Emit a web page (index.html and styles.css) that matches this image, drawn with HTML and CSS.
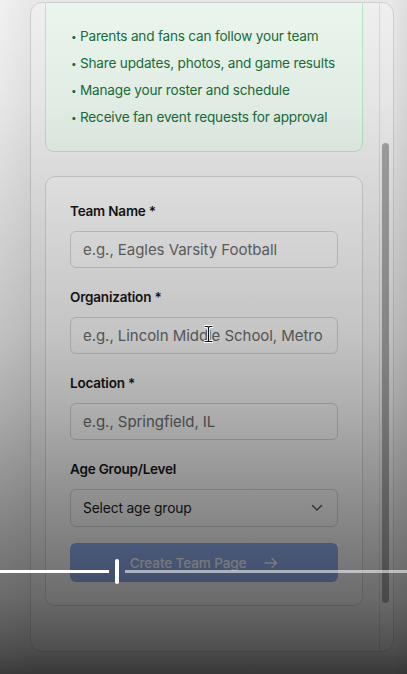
FILE: index.html
```html
<!DOCTYPE html>
<html lang="en">
<head>
<meta charset="utf-8">
<title>Create Team Page</title>
<link rel="stylesheet" href="styles.css">
</head>
<body>
<div class="stage">
  <div class="card">
    <div class="content">
      <div class="benefits">
        <ul class="benefit-list">
          <li><span class="dot">•</span>Parents and fans can follow your team</li>
          <li><span class="dot">•</span>Share updates, photos, and game results</li>
          <li><span class="dot">•</span>Manage your roster and schedule</li>
          <li><span class="dot">•</span>Receive fan event requests for approval</li>
        </ul>
      </div>
      <form class="form-card">
        <div class="field">
          <label class="label">Team Name *</label>
          <input class="input" type="text" placeholder="e.g., Eagles Varsity Football">
        </div>
        <div class="field">
          <label class="label">Organization *</label>
          <input class="input" type="text" placeholder="e.g., Lincoln Middle School, Metro League">
        </div>
        <div class="field">
          <label class="label">Location *</label>
          <input class="input" type="text" placeholder="e.g., Springfield, IL">
        </div>
        <div class="field">
          <label class="label">Age Group/Level</label>
          <div class="select">
            <span>Select age group</span>
            <svg class="chev" width="12" height="8" viewBox="0 0 12 8"><path d="M1.5 1.5 L6 6 L10.5 1.5" fill="none" stroke="#555" stroke-width="1.4" stroke-linecap="round" stroke-linejoin="round"/></svg>
          </div>
        </div>
        <button class="submit" type="button" disabled>
          <span>Create Team Page</span>
          <svg width="14" height="12" viewBox="0 0 14 12"><path d="M1 6 H12.5 M8 1.5 L12.5 6 L8 10.5" fill="none" stroke="#fff" stroke-width="1.5" stroke-linecap="round" stroke-linejoin="round"/></svg>
        </button>
      </form>
    </div>
    <div class="track"><div class="thumb"></div></div>
  </div>
  <div class="shade"></div>
  <svg class="ibeam" width="9" height="18" viewBox="0 0 9 18"><path d="M1 1.5 H3.5 Q4.5 1.5 4.5 2.5 V15.5 Q4.5 16.5 3.5 16.5 H1 M8 1.5 H5.5 Q4.5 1.5 4.5 2.5 M4.5 15.5 Q4.5 16.5 5.5 16.5 H8" fill="none" stroke="#fff" stroke-width="3" stroke-linecap="round"/><path d="M1 1.5 H3.5 Q4.5 1.5 4.5 2.5 V15.5 Q4.5 16.5 3.5 16.5 H1 M8 1.5 H5.5 Q4.5 1.5 4.5 2.5 M4.5 15.5 Q4.5 16.5 5.5 16.5 H8" fill="none" stroke="#111" stroke-width="1.2" stroke-linecap="round"/></svg>
  <div class="scrubber">
    <div class="played"></div>
    <div class="handle"></div>
    <div class="rest"></div>
  </div>
</div>
</body>
</html>
```

FILE: styles.css
```css
* { box-sizing: border-box; }
html, body { margin: 0; padding: 0; }
body {
  width: 407px;
  height: 674px;
  overflow: hidden;
  font-family: Inter, "Noto Sans", "Liberation Sans", sans-serif;
  background: linear-gradient(to right, #f6f6f6 0px, #ececec 30px, #ececec 394px, #e2e2e2 407px);
}
.stage {
  position: relative;
  width: 407px;
  height: 674px;
  padding: 2px 13px 22px 30px;
}
.card {
  height: 650px;
  display: flex;
  border: 1px solid #d2d2d2;
  border-radius: 12px;
  background: #f4f4f4;
  overflow: hidden;
}
.content {
  width: 332px;
  padding-left: 14px;
  flex: none;
}
.benefits {
  margin-top: -12px;
  background: #effbf2;
  border: 1px solid #bfe9cb;
  border-radius: 9px;
  padding: 31px 10px 20px 25px;
}
.benefit-list {
  list-style: none;
  margin: 0;
  padding: 0;
  color: #1b6f3b;
  font-size: 13.6px;
  letter-spacing: -0.2px;
  line-height: 27px;
  white-space: nowrap;
}
.benefit-list li {
  height: 27px;
}
.dot {
  display: inline-block;
  width: 9px;
  font-size: 10px;
  line-height: 10px;
  vertical-align: 1px;
}
.form-card {
  margin-top: 24px;
  background: #f9f9f9;
  border: 1px solid #d6d6d6;
  border-radius: 10px;
  padding: 24px 24px 23px;
  display: flex;
  flex-direction: column;
}
.field {
  display: flex;
  flex-direction: column;
  margin-bottom: 19px;
}
.field:nth-child(4) { margin-bottom: 16px; }
.label {
  font-size: 13.5px;
  font-weight: 600;
  letter-spacing: -0.2px;
  color: #161616;
  line-height: 20px;
  margin-bottom: 10px;
}
.input {
  height: 37px;
  border: 1px solid #d4d4d4;
  border-radius: 6px;
  background: #fafafa;
  padding: 0 12px;
  font-family: inherit;
  font-size: 15px;
  letter-spacing: -0.05px;
  color: #222;
  outline: none;
}
.input::placeholder { color: #6c6c6c; }
.select {
  height: 38px;
  border: 1px solid #d4d4d4;
  border-radius: 6px;
  background: #fafafa;
  padding: 0 14px 0 12px;
  display: flex;
  align-items: center;
  justify-content: space-between;
  font-size: 13.8px;
  letter-spacing: -0.15px;
  color: #1a1a1a;
}
.submit {
  height: 39px;
  border: none;
  border-radius: 6px;
  background: #2e66e6;
  opacity: 0.5;
  color: #fff;
  font-family: inherit;
  font-size: 13.6px;
  letter-spacing: -0.15px;
  font-weight: 500;
  display: flex;
  align-items: center;
  justify-content: center;
  gap: 18px;
  padding: 0;
}
.track {
  flex: none;
  width: 14px;
  margin-left: auto;
  border-left: 1px solid #dcdcdc;
  padding-top: 140px;
  padding-left: 2px;
}
.thumb {
  width: 7px;
  height: 460px;
  border-radius: 4px;
  background: #a9a9a9;
}
.shade {
  position: absolute;
  inset: 0;
  pointer-events: none;
  background: linear-gradient(to bottom,
    rgba(0,0,0,0.02) 0px,
    rgba(0,0,0,0.06) 100px,
    rgba(0,0,0,0.125) 200px,
    rgba(0,0,0,0.21) 330px,
    rgba(0,0,0,0.29) 400px,
    rgba(0,0,0,0.43) 500px,
    rgba(0,0,0,0.57) 600px,
    rgba(0,0,0,0.68) 650px,
    rgba(0,0,0,0.76) 674px);
}
.ibeam {
  position: absolute;
  left: 204px;
  top: 325px;
}
.scrubber {
  position: absolute;
  left: 0;
  top: 559px;
  width: 407px;
  height: 26px;
}
.played {
  position: absolute;
  left: 0;
  top: 11px;
  width: 109px;
  height: 3px;
  background: #ffffff;
}
.handle {
  position: absolute;
  left: 115px;
  top: 0;
  width: 4px;
  height: 25px;
  border-radius: 2px;
  background: #ffffff;
}
.rest {
  position: absolute;
  left: 125px;
  top: 11px;
  right: 0;
  height: 3px;
  background: rgba(255,255,255,0.55);
}
```
